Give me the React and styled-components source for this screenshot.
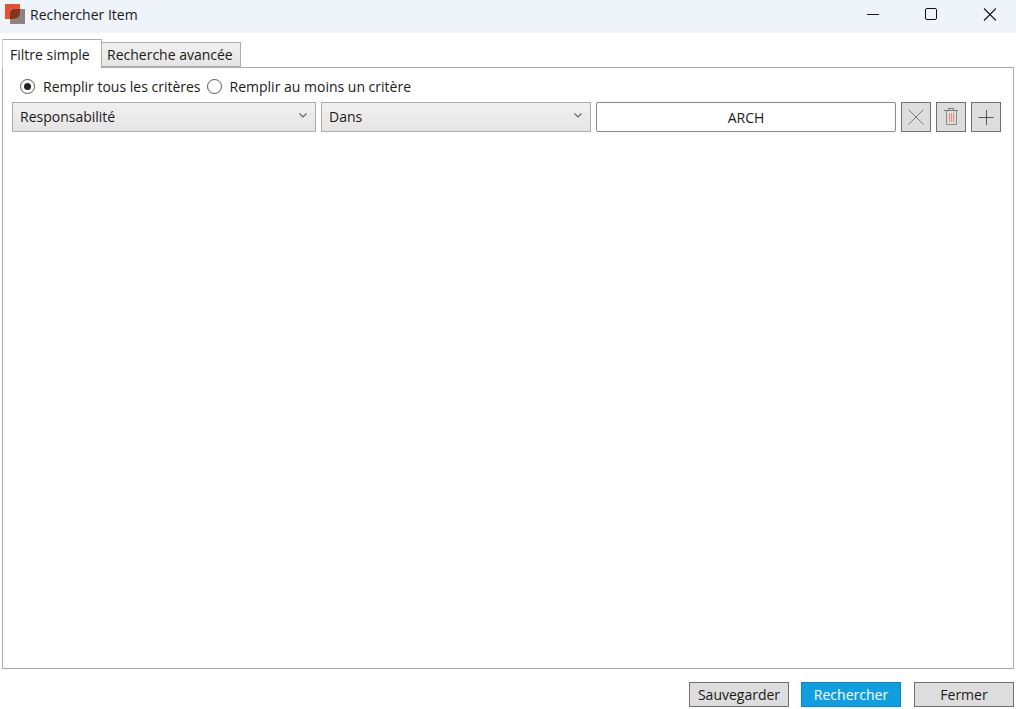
import styled, { createGlobalStyle } from "styled-components";

const GlobalStyle = createGlobalStyle`
  html, body {
    margin: 0;
    padding: 0;
    background: #ffffff;
  }
  body {
    font-family: "Open Sans", "Noto Sans", sans-serif;
    font-size: 14px;
    color: #1a1a1a;
  }
`;

const App = () => {
  return (
    <>
      <GlobalStyle />
      <Window>
        <TitleBar>
          <AppTitle>
            <Logo viewBox="0 0 20 20">
              <rect x="0" y="0" width="15" height="15" fill="#e8502f" />
              <rect x="5" y="5" width="15" height="15" fill="#8a8483" />
              <path d="M5 15 V10 Q5 5 10 5 H15 V8 Q15 15 8 15 Z" fill="#84331f" />
            </Logo>
            <span>Rechercher Item</span>
          </AppTitle>
          <WindowControls>
            <WindowButton>
              <svg width="12" height="12" viewBox="0 0 12 12">
                <path d="M0 6.5 H12" stroke="#1a1a1a" strokeWidth="1" />
              </svg>
            </WindowButton>
            <WindowButton>
              <svg width="12" height="12" viewBox="0 0 12 12">
                <rect x="0.5" y="0.5" width="11" height="11" rx="1.5" fill="none" stroke="#111" strokeWidth="1" />
              </svg>
            </WindowButton>
            <WindowButton>
              <svg width="14" height="14" viewBox="0 0 14 14">
                <path d="M2 1.5 L14 13.5 M14 1.5 L2 13.5" stroke="#111" strokeWidth="1.1" />
              </svg>
            </WindowButton>
          </WindowControls>
        </TitleBar>
        <Tabs>
          <Tab $active $width={100}>Filtre simple</Tab>
          <Tab $width={139}>Recherche avancée</Tab>
        </Tabs>
        <Panel>
          <RadioRow>
            <RadioLabel>
              <Radio $checked />
              Remplir tous les critères
            </RadioLabel>
            <RadioLabel>
              <Radio />
              Remplir au moins un critère
            </RadioLabel>
          </RadioRow>
          <FilterRow>
            <Select $width={304}>
              Responsabilité
              <Chevron />
            </Select>
            <Select $width={270}>
              Dans
              <Chevron />
            </Select>
            <ValueInput readOnly value="ARCH" />
            <IconButton>
              <svg width="20" height="20" viewBox="0 0 20 20">
                <path d="M2.5 2.5 L17.5 17.5 M17.5 2.5 L2.5 17.5" stroke="#7a7a7a" strokeWidth="1" />
              </svg>
            </IconButton>
            <IconButton>
              <svg width="20" height="20" viewBox="0 0 20 20">
                <path d="M3 3.5 H17 M7.5 3.5 V1.5 H12.5 V3.5" fill="none" stroke="#777" strokeWidth="1" />
                <path d="M5.5 3.5 V17.5 H15.5 V3.5" fill="none" stroke="#8a8a8a" strokeWidth="1" />
                <path d="M8.5 6 V15 M10.5 6 V15 M12.5 6 V15" stroke="#f08a70" strokeWidth="1" />
              </svg>
            </IconButton>
            <IconButton>
              <svg width="20" height="20" viewBox="0 0 20 20">
                <path d="M2.5 10.5 H17.5 M10.5 3 V18" stroke="#555" strokeWidth="1" />
              </svg>
            </IconButton>
          </FilterRow>
        </Panel>
        <Footer>
          <FooterButton>Sauvegarder</FooterButton>
          <FooterButton $primary>Rechercher</FooterButton>
          <FooterButton>Fermer</FooterButton>
        </Footer>
      </Window>
    </>
  );
};

const Chevron = () => (
  <ChevronIcon width="8" height="5" viewBox="0 0 8 5">
    <path d="M0.5 0.5 L4 4 L7.5 0.5" fill="none" stroke="#666" strokeWidth="1.2" />
  </ChevronIcon>
);

export default App;

const Window = styled.div`
  width: 1016px;
  height: 709px;
  display: flex;
  flex-direction: column;
  overflow: hidden;
`;

const TitleBar = styled.div`
  height: 33px;
  flex: none;
  display: flex;
  justify-content: space-between;
  align-items: center;
  padding-left: 5px;
  background-color: #eff3fa;
`;

const AppTitle = styled.div`
  display: flex;
  align-items: center;
  gap: 5px;
  font-size: 14px;
  margin-top: -5px;
`;

const Logo = styled.svg`
  width: 20px;
  height: 20px;
`;

const WindowControls = styled.div`
  display: flex;
  margin-top: -5px;
  margin-right: -2px;
`;

const WindowButton = styled.div`
  width: 58px;
  height: 30px;
  display: flex;
  align-items: center;
  justify-content: center;
`;

const Tabs = styled.div`
  flex: none;
  height: 28px;
  margin-top: 6px;
  padding-left: 2px;
  display: flex;
  align-items: flex-end;
  position: relative;
  z-index: 1;
`;

const Tab = styled.div`
  width: ${({ $width }) => $width}px;
  height: ${({ $active }) => ($active ? "29px" : "25px")};
  padding: 0 ${({ $active }) => ($active ? "7px" : "5px")};
  margin-bottom: ${({ $active }) => ($active ? "-1px" : "0")};
  display: flex;
  align-items: center;
  box-sizing: border-box;
  flex: none;
  font-size: 14px;
  white-space: nowrap;
  background: ${({ $active }) => ($active ? "#ffffff" : "linear-gradient(#f0f0f0, #e5e5e5)")};
  border: 1px solid #acacac;
  border-bottom: ${({ $active }) => ($active ? "none" : "1px solid #acacac")};
  border-left: ${({ $active }) => ($active ? "1px solid #d0d0d0" : "none")};
`;

const Panel = styled.div`
  flex: none;
  height: 602px;
  box-sizing: border-box;
  margin: 0 2px;
  padding: 8px 12px 0 9px;
  border: 1px solid #acacac;
  display: flex;
  flex-direction: column;
`;

const RadioRow = styled.div`
  height: 21px;
  margin-left: 8px;
  display: flex;
  align-items: center;
  gap: 6px;
`;

const RadioLabel = styled.label`
  display: flex;
  align-items: center;
  gap: 8px;
`;

const Radio = styled.span`
  width: 15px;
  height: 15px;
  box-sizing: border-box;
  border-radius: 50%;
  border: 1px solid #555;
  display: flex;
  align-items: center;
  justify-content: center;
  &::after {
    content: "";
    display: ${({ $checked }) => ($checked ? "block" : "none")};
    width: 7px;
    height: 7px;
    border-radius: 50%;
    background-color: #222;
  }
`;

const FilterRow = styled.div`
  margin-top: 5px;
  height: 30px;
  display: flex;
  gap: 5px;
`;

const Select = styled.div`
  width: ${({ $width }) => $width}px;
  box-sizing: border-box;
  padding: 0 8px 1px 7px;
  display: flex;
  align-items: center;
  justify-content: space-between;
  background: linear-gradient(#f0f0f0, #e5e5e5);
  border: 1px solid #acacac;
`;

const ChevronIcon = styled.svg`
  flex: none;
  margin-bottom: 2px;
`;

const ValueInput = styled.input`
  width: 300px;
  box-sizing: border-box;
  padding: 0;
  border: 1px solid #8a8a8a;
  border-radius: 2px;
  outline: none;
  font: inherit;
  color: inherit;
  text-align: center;
`;

const IconButton = styled.div`
  width: 30px;
  box-sizing: border-box;
  display: flex;
  align-items: center;
  justify-content: center;
  background-color: #dddddd;
  border: 1px solid #707070;
`;

const Footer = styled.div`
  flex: none;
  margin-top: 13px;
  padding-right: 2px;
  display: flex;
  justify-content: flex-end;
  gap: 12px;
`;

const FooterButton = styled.div`
  width: 100px;
  height: 25px;
  box-sizing: border-box;
  display: flex;
  align-items: center;
  justify-content: center;
  background-color: ${({ $primary }) => ($primary ? "#0f9fdf" : "#dddddd")};
  color: ${({ $primary }) => ($primary ? "#ffffff" : "#1a1a1a")};
  border: 1px solid ${({ $primary }) => ($primary ? "#0a84d8" : "#707070")};
  &:last-child {
    margin-left: 1px;
  }
`;
